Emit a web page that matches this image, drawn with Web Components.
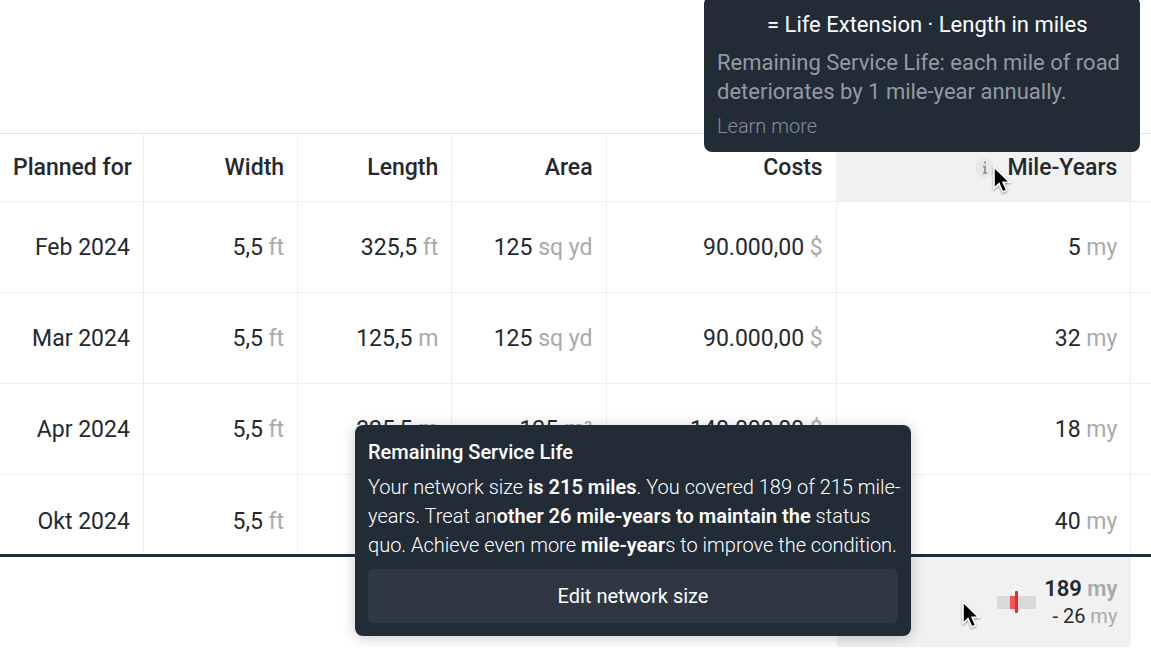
<!DOCTYPE html>
<html lang="en">
<head>
<meta charset="utf-8">
<meta name="viewport" content="width=device-width, initial-scale=1">
<title>Planned treatments</title>
<style>
    html, body {
        margin: 0;
        background: #fff;
    }

    body {
        font-family: Roboto, "Liberation Sans", sans-serif;
        font-size: 23px;
        line-height: 27px;
        color: #23292f;
        overflow: hidden;
    }
</style>
</head>
<body>
<treatment-page></treatment-page>

<script>
// value with a grey unit behind it
class UnitValue extends HTMLElement {
    constructor() {
        super();
        this.shadowDOM = this.attachShadow({mode: 'open'});
    }

    connectedCallback() {
        this.render();
    }

    render() {
        this.shadowDOM.innerHTML = `
            <style>
                :host {
                    display: inline;
                    white-space: nowrap;
                }

                span {
                    color: #a8aaac;
                }
            </style>

            <slot></slot> <span>${this.getAttribute('unit')}</span>`;
    }
}

customElements.define('unit-value', UnitValue);


// small round "i" button in a column header
class InfoButton extends HTMLElement {
    constructor() {
        super();
        this.shadowDOM = this.attachShadow({mode: 'open'});
    }

    connectedCallback() {
        this.render();
    }

    render() {
        this.shadowDOM.innerHTML = `
            <style>
                :host {
                    display: inline-flex;
                }

                button {
                    display: flex;
                    align-items: center;
                    justify-content: center;
                    width: 20px;
                    height: 20px;
                    padding: 0;
                    border: 0;
                    border-radius: 50%;
                    background: #e8e8e8;
                }
            </style>

            <button type="button" aria-label="About mile-years">
                <svg width="6" height="14" viewBox="0 0 6 14" fill="none" stroke="#97999b" stroke-width="2">
                    <path d="M2 1.5h2M1 5.5h2v6M1 12h4"/>
                </svg>
            </button>`;
    }
}

customElements.define('info-button', InfoButton);


// range bar: grey track, red gap and the target marker
class GapBar extends HTMLElement {
    constructor() {
        super();
        this.shadowDOM = this.attachShadow({mode: 'open'});
    }

    connectedCallback() {
        this.render();
    }

    render() {
        this.shadowDOM.innerHTML = `
            <style>
                :host {
                    display: block;
                }

                svg {
                    display: block;
                }
            </style>

            <svg width="39" height="22" viewBox="0 0 39 22" aria-hidden="true">
                <rect y="5" width="39" height="13" rx="1" fill="#d9d9d9"/>
                <rect x="13" y="5" width="6" height="13" fill="#ff5257"/>
                <rect x="18" width="3" height="22" rx="1" fill="#c9353d"/>
            </svg>`;
    }
}

customElements.define('gap-bar', GapBar);


class MousePointer extends HTMLElement {
    constructor() {
        super();
        this.shadowDOM = this.attachShadow({mode: 'open'});
    }

    connectedCallback() {
        this.render();
    }

    render() {
        this.shadowDOM.innerHTML = `
            <style>
                :host {
                    display: block;
                    pointer-events: none;
                }

                svg {
                    display: block;
                    filter: drop-shadow(0 1px 1px rgba(0, 0, 0, 0.4));
                }
            </style>

            <svg width="20" height="30" viewBox="0 0 20 30" aria-hidden="true">
                <path d="M2 2v21.500l5-4.800 3.700 8.300 4-1.800-3.600-8h6.600z" fill="#000" stroke="#fff" stroke-width="1.600"/>
            </svg>`;
    }
}

customElements.define('mouse-pointer', MousePointer);


// dark floating card, content comes in through slots
class InfoCard extends HTMLElement {
    constructor() {
        super();
        this.shadowDOM = this.attachShadow({mode: 'open'});
    }

    connectedCallback() {
        this.render();
    }

    render() {
        this.shadowDOM.innerHTML = `
            <style>
                :host {
                    display: flex;
                    flex-direction: column;
                    box-sizing: border-box;
                    padding: 13px;
                    border-radius: 8px;
                    background: #222c37;
                    color: #fff;
                }
            </style>

            <slot name="title"></slot>
            <slot></slot>
            <slot name="action"></slot>`;
    }
}

customElements.define('info-card', InfoCard);


class TreatmentTable extends HTMLElement {
    constructor() {
        super();
        this.shadowDOM = this.attachShadow({mode: 'open'});
    }

    connectedCallback() {
        this.rows = [
            ['Feb 2024', ['5,5', 'ft'], ['325,5', 'ft'], ['125', 'sq yd'], ['90.000,00', '$'], ['5', 'my']],
            ['Mar 2024', ['5,5', 'ft'], ['125,5', 'm'], ['125', 'sq yd'], ['90.000,00', '$'], ['32', 'my']],
            ['Apr 2024', ['5,5', 'ft'], ['325,5', 'm'], ['125', 'm²'], ['140.000,00', '$'], ['18', 'my']],
            ['Okt 2024', ['5,5', 'ft'], null, null, null, ['40', 'my']]
        ];
        this.render();
    }

    renderCell(cell) {
        return cell ? `<td><unit-value unit="${cell[1]}">${cell[0]}</unit-value></td>` : '<td></td>';
    }

    renderRow(row) {
        return `<tr><td>${row[0]}</td>${row.slice(1).map(this.renderCell).join('')}<td></td></tr>`;
    }

    render() {
        this.shadowDOM.innerHTML = `
            <style>
                :host {
                    display: block;
                }

                table {
                    width: 100%;
                    table-layout: fixed;
                    border-spacing: 0;
                    border-top: 1px solid #e2e3e5;
                }

                .date {
                    width: 12.5%;
                }

                .size {
                    width: 13.4%;
                }

                .costs {
                    width: 20%;
                }

                .years {
                    width: 25.6%;
                }

                th, td {
                    padding: 32px 13px 31px;
                    border-right: 1px solid #efeff0;
                    border-bottom: 1px solid #efeff0;
                    text-align: right;
                    white-space: nowrap;
                }

                th {
                    padding: 20px 13px;
                    font-weight: 500;
                }

                th:last-child, td:last-child {
                    padding-left: 0;
                    padding-right: 0;
                    border-right: 0;
                }

                .active {
                    background: #f1f1f1;
                }

                .label {
                    display: flex;
                    align-items: center;
                    justify-content: flex-end;
                    gap: 12px;
                }

                /* the totals row cuts the last body row */
                tbody tr:last-child td {
                    padding-top: 33px;
                    padding-bottom: 19px;
                    border-bottom: 0;
                }

                tfoot td {
                    padding: 18px 14px;
                    border-top: 3px solid #222c37;
                    border-right: 0;
                    border-bottom: 0;
                }

                .total {
                    display: flex;
                    align-items: center;
                    justify-content: flex-end;
                    gap: 8px;
                }

                strong {
                    display: block;
                    font-size: 22px;
                    line-height: 28px;
                    font-weight: 600;
                }

                small {
                    display: block;
                    font-size: 20px;
                    line-height: 26px;
                }
            </style>

            <table>
                <colgroup>
                    <col class="date"><col class="size"><col class="size"><col class="size"><col class="costs"><col class="years"><col>
                </colgroup>
                <thead>
                    <tr>
                        <th>Planned for</th>
                        <th>Width</th>
                        <th>Length</th>
                        <th>Area</th>
                        <th>Costs</th>
                        <th class="active"><div class="label"><info-button></info-button>Mile-Years</div></th>
                        <th></th>
                    </tr>
                </thead>
                <tbody>${this.rows.map((row) => this.renderRow(row)).join('')}</tbody>
                <tfoot>
                    <tr>
                        <td></td>
                        <td></td>
                        <td></td>
                        <td></td>
                        <td></td>
                        <td class="active">
                            <div class="total">
                                <gap-bar></gap-bar>
                                <div>
                                    <strong><unit-value unit="my">189</unit-value></strong>
                                    <small><unit-value unit="my">- 26</unit-value></small>
                                </div>
                            </div>
                        </td>
                        <td></td>
                    </tr>
                </tfoot>
            </table>`;
    }
}

customElements.define('treatment-table', TreatmentTable);


class TreatmentPage extends HTMLElement {
    constructor() {
        super();
        this.shadowDOM = this.attachShadow({mode: 'open'});
    }

    connectedCallback() {
        this.render();
    }

    render() {
        this.shadowDOM.innerHTML = `
            <style>
                :host {
                    display: block;
                    position: relative;
                    padding-top: 133px;
                }

                p, h2 {
                    margin: 0;
                }

                /* cards and pointers float over the table */
                .formula {
                    position: absolute;
                    top: -4px;
                    right: 11px;
                    width: 436px;
                }

                .formula h2 {
                    padding: 2px 0 10px 50px;
                    font-size: 22px;
                    line-height: 27px;
                    font-weight: 400;
                }

                .formula p {
                    font-size: 22px;
                    line-height: 29px;
                    color: #949aa1;
                    padding-bottom: 9px;
                }

                .formula a {
                    font-size: 20px;
                    line-height: 22px;
                    font-weight: 300;
                    padding-bottom: 2px;
                    color: #848c94;
                    text-decoration: none;
                }

                .network {
                    position: absolute;
                    top: 425px;
                    left: 355px;
                    width: 556px;
                    box-shadow: 0 2px 14px rgba(34, 44, 55, 0.25);
                }

                .network h2 {
                    padding: 1px 0 8px;
                    font-size: 20px;
                    line-height: 26px;
                    font-weight: 500;
                }

                .network p {
                    margin-right: -8px;
                    font-size: 20px;
                    line-height: 29px;
                    font-weight: 300;
                    padding-bottom: 9px;
                }

                .network b {
                    font-weight: 600;
                }

                .network button {
                    padding: 14px;
                    border: 0;
                    border-radius: 5px;
                    background: #2e3742;
                    color: #fff;
                    font: 400 20px/26px Roboto, "Liberation Sans", sans-serif;
                }

                .header-pointer {
                    position: absolute;
                    top: 165px;
                    left: 992px;
                }

                .total-pointer {
                    position: absolute;
                    top: 600px;
                    left: 961px;
                }
            </style>

            <treatment-table></treatment-table>

            <info-card class="formula">
                <h2 slot="title">= Life Extension · Length in miles</h2>
                <p>Remaining Service Life: each mile of road deteriorates by 1 mile-year annually.</p>
                <a slot="action" href="#learn-more">Learn more</a>
            </info-card>

            <info-card class="network">
                <h2 slot="title">Remaining Service Life</h2>
                <p>Your network size <b>is 215 miles</b>. You covered 189 of 215 mile-<wbr>years. Treat an<b>other 26 mile-years to maintain the</b> status quo. Achieve even more <b>mile-year</b>s to improve the condition.</p>
                <button slot="action" type="button">Edit network size</button>
            </info-card>

            <mouse-pointer class="header-pointer"></mouse-pointer>
            <mouse-pointer class="total-pointer"></mouse-pointer>`;
    }
}

customElements.define('treatment-page', TreatmentPage);
</script>
</body>
</html>
